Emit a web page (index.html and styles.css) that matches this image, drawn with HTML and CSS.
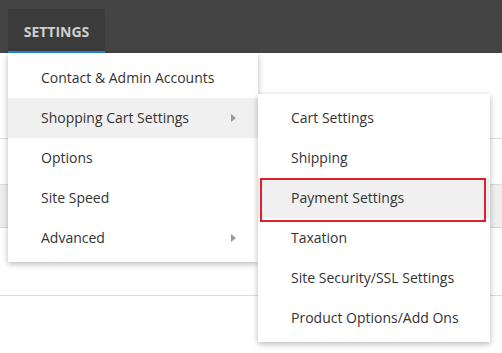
FILE: index.html
```html
<!DOCTYPE html>
<html>
<head>
<meta charset="utf-8">
<link rel="stylesheet" href="styles.css">
</head>
<body>
<header class="topbar">
  <div class="tab">SETTINGS</div>
</header>
<main class="content">
  <div class="row r1"></div>
  <div class="row r2"></div>
  <div class="row band"></div>
  <div class="row r3"></div>
</main>
<nav class="menu main-menu">
  <div class="item">Contact &amp; Admin Accounts</div>
  <div class="item active has-sub">Shopping Cart Settings<span class="caret"></span></div>
  <div class="item">Options</div>
  <div class="item">Site Speed</div>
  <div class="item has-sub">Advanced<span class="caret"></span></div>
</nav>
<nav class="menu sub-menu">
  <div class="item">Cart Settings</div>
  <div class="item">Shipping</div>
  <div class="item active marked">Payment Settings</div>
  <div class="item">Taxation</div>
  <div class="item">Site Security/SSL Settings</div>
  <div class="item">Product Options/Add Ons</div>
</nav>
</body>
</html>
```
FILE: styles.css
```css
* { box-sizing: border-box; }
html, body { margin: 0; padding: 0; }
body {
  width: 502px;
  height: 353px;
  overflow: hidden;
  position: relative;
  background: #fff;
  font-family: "Open Sans", "Noto Sans", sans-serif;
  font-size: 14px;
  color: #333;
}
.topbar {
  height: 53px;
  background: #444444;
  display: flex;
  align-items: flex-end;
  padding-left: 8px;
}
.tab {
  width: 97px;
  height: 44px;
  background: #3b3b3b;
  border-bottom: 2px solid #1e88e5;
  color: #cfcfcf;
  font-weight: 700;
  font-size: 14px;
  display: flex;
  align-items: center;
  justify-content: center;
  padding-top: 3px;
}
.content { display: flex; flex-direction: column; }
.row { border-bottom: 1px solid #dcdcdc; }
.r1 { height: 86px; }
.r2 { height: 46px; }
.band { height: 43px; background: #efefef; border-bottom-color: #d6d6d6; }
.r3 { height: 68px; }

.menu {
  position: absolute;
  background: #fff;
  box-shadow: 0 2px 6px rgba(0,0,0,0.28);
}
.main-menu {
  left: 8px;
  top: 53px;
  width: 250px;
  padding: 5px 0 4px;
}
.sub-menu {
  left: 258px;
  top: 94px;
  width: 232px;
  padding: 4px 0;
}
.item {
  height: 40px;
  display: flex;
  align-items: center;
  padding-left: 33px;
  padding-bottom: 1px;
  position: relative;
  white-space: nowrap;
}
.item.active { background: #f0f0f0; }
.caret {
  position: absolute;
  left: 223px;
  top: 16px;
  width: 0;
  height: 0;
  border-top: 4px solid transparent;
  border-bottom: 4px solid transparent;
  border-left: 5px solid #9a9a9a;
}
.marked::after {
  content: "";
  position: absolute;
  left: 2px;
  right: 4px;
  top: 0;
  bottom: -4px;
  border: 2px solid #e0202a;
}
```
